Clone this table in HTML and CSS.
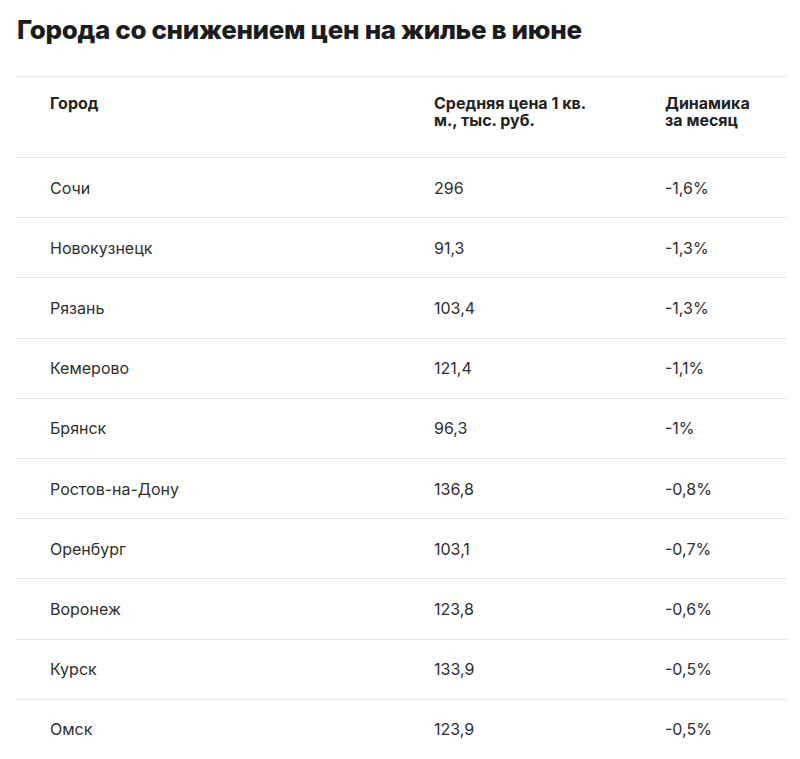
FILE: index.html
```html
<!DOCTYPE html>
<html lang="ru">
<head>
<meta charset="utf-8">
<link rel="stylesheet" href="styles.css">
</head>
<body>
<div class="page">
  <h1 class="title">Города со снижением цен на жилье в июне</h1>
  <div class="table">
    <div class="row head">
      <div>Город</div>
      <div>Средняя цена 1 кв.<br>м., тыс. руб.</div>
      <div>Динамика<br>за месяц</div>
    </div>
    <div class="row"><div>Сочи</div><div>296</div><div>-1,6%</div></div>
    <div class="row"><div>Новокузнецк</div><div>91,3</div><div>-1,3%</div></div>
    <div class="row"><div>Рязань</div><div>103,4</div><div>-1,3%</div></div>
    <div class="row"><div>Кемерово</div><div>121,4</div><div>-1,1%</div></div>
    <div class="row"><div>Брянск</div><div>96,3</div><div>-1%</div></div>
    <div class="row"><div>Ростов-на-Дону</div><div>136,8</div><div>-0,8%</div></div>
    <div class="row"><div>Оренбург</div><div>103,1</div><div>-0,7%</div></div>
    <div class="row"><div>Воронеж</div><div>123,8</div><div>-0,6%</div></div>
    <div class="row"><div>Курск</div><div>133,9</div><div>-0,5%</div></div>
    <div class="row"><div>Омск</div><div>123,9</div><div>-0,5%</div></div>
  </div>
</div>
</body>
</html>
```
FILE: styles.css
```css
html, body {
  margin: 0;
  padding: 0;
  background: #ffffff;
}
.page {
  padding: 14px 13px 0 16px;
  font-family: Inter, "Noto Sans", sans-serif;
  color: #2e2e2e;
}
.title {
  margin: 0 0 0 1px;
  font-size: 26px;
  line-height: 32px;
  font-weight: 800;
  color: #1c1c1c;
  letter-spacing: -0.35px;
}
.table {
  margin-top: 30px;
}
.row {
  display: grid;
  grid-template-columns: 384px 231px 1fr;
  padding-left: 34px;
  border-top: 1px solid #e6e6e6;
  height: 59.2px;
  align-items: center;
  font-size: 16px;
  line-height: 18px;
}
.row.head {
  height: 80px;
  align-items: start;
  font-weight: 700;
  color: #222;
  line-height: 17px;
}
.row.head > div {
  padding-top: 18px;
}
```
